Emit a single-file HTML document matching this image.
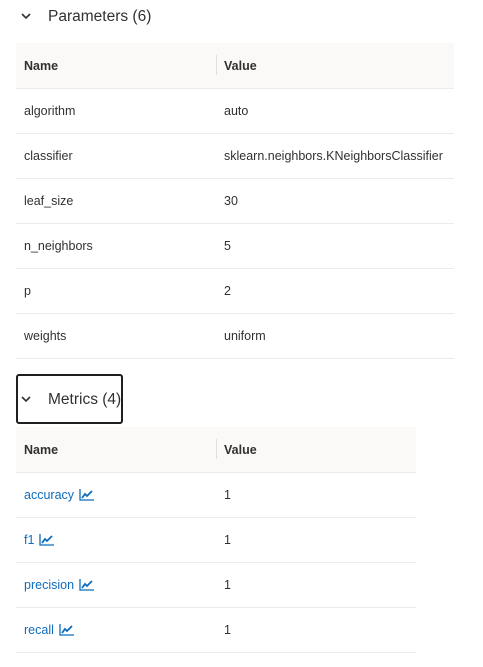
<!DOCTYPE html>
<html><head><style>
body{margin:0;background:#fff;font-family:"Liberation Sans",sans-serif;color:#323130;width:483px;height:667px;overflow:hidden;position:relative}
.hdr{position:absolute;display:flex;align-items:center;font-size:15.5px;color:#323130}
.chev{position:absolute}
table{position:absolute;border-collapse:collapse;font-size:12.5px;table-layout:fixed}
td,th{box-sizing:border-box;height:45px;padding:1px 0 0 8px;text-align:left;border-bottom:1px solid #edebe9;font-weight:normal;white-space:nowrap}
th{background:#faf9f8;font-weight:bold}
th.v{position:relative}
th.v:before{content:"";position:absolute;left:0;top:12px;height:20px;border-left:1px solid #e1dfdd}
a{color:#0f6cbd;text-decoration:none}
svg.ic{vertical-align:-2px;margin-left:5px}
</style></head><body>
<svg class="chev" style="left:21px;top:12px" width="10" height="8"><path d="M1 2 L5 6 L9 2" fill="none" stroke="#323130" stroke-width="1.6"/></svg>
<div class="hdr" style="left:48px;top:8px">Parameters (6)</div>
<table style="left:16px;top:43px;width:438px">
<colgroup><col style="width:200px"><col></colgroup>
<tr><th>Name</th><th class="v">Value</th></tr>
<tr><td>algorithm</td><td>auto</td></tr>
<tr><td>classifier</td><td>sklearn.neighbors.KNeighborsClassifier</td></tr>
<tr><td>leaf_size</td><td>30</td></tr>
<tr><td>n_neighbors</td><td>5</td></tr>
<tr><td>p</td><td>2</td></tr>
<tr><td>weights</td><td>uniform</td></tr>
</table>
<div style="position:absolute;left:16px;top:374px;width:103px;height:46px;border:2px solid #201f1e;border-radius:3px"></div>
<svg class="chev" style="left:21px;top:395px" width="10" height="8"><path d="M1 2 L5 6 L9 2" fill="none" stroke="#323130" stroke-width="1.6"/></svg>
<div class="hdr" style="left:48px;top:391px">Metrics (4)</div>
<table style="left:16px;top:427px;width:400px">
<colgroup><col style="width:200px"><col></colgroup>
<tr><th>Name</th><th class="v">Value</th></tr>
<tr><td><a>accuracy</a><svg class="ic" width="15" height="12"><path d="M1 0V11H15" fill="none" stroke="#0f6cbd" stroke-width="1.3"/><path d="M3 9 L6 5 L8 7 L13 2" fill="none" stroke="#0f6cbd" stroke-width="1.8"/></svg></td><td>1</td></tr>
<tr><td><a>f1</a><svg class="ic" width="15" height="12"><path d="M1 0V11H15" fill="none" stroke="#0f6cbd" stroke-width="1.3"/><path d="M3 9 L6 5 L8 7 L13 2" fill="none" stroke="#0f6cbd" stroke-width="1.8"/></svg></td><td>1</td></tr>
<tr><td><a>precision</a><svg class="ic" width="15" height="12"><path d="M1 0V11H15" fill="none" stroke="#0f6cbd" stroke-width="1.3"/><path d="M3 9 L6 5 L8 7 L13 2" fill="none" stroke="#0f6cbd" stroke-width="1.8"/></svg></td><td>1</td></tr>
<tr><td><a>recall</a><svg class="ic" width="15" height="12"><path d="M1 0V11H15" fill="none" stroke="#0f6cbd" stroke-width="1.3"/><path d="M3 9 L6 5 L8 7 L13 2" fill="none" stroke="#0f6cbd" stroke-width="1.8"/></svg></td><td>1</td></tr>
</table>
</body></html>
